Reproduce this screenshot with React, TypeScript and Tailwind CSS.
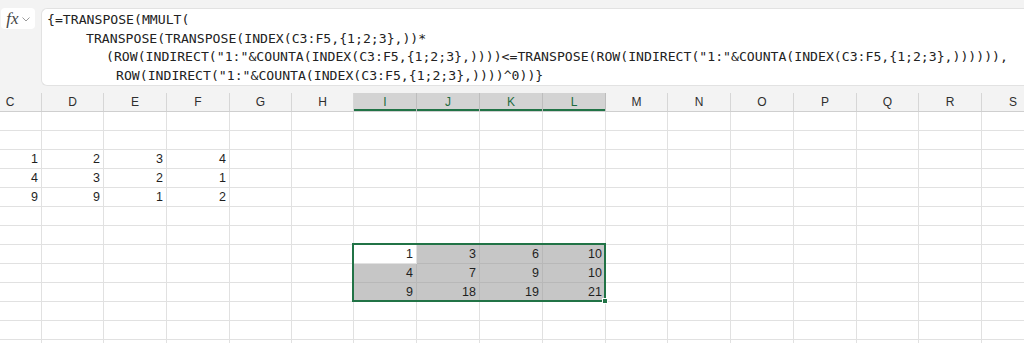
import React from 'react';

// column strip as it shows in the sheet (C is cut off on the left)
const COLS = [
    { l: 'C', w: 63 }, { l: 'D', w: 62 }, { l: 'E', w: 63 }, { l: 'F', w: 63 },
    { l: 'G', w: 62 }, { l: 'H', w: 62 }, { l: 'I', w: 63 }, { l: 'J', w: 63 },
    { l: 'K', w: 63 }, { l: 'L', w: 63 }, { l: 'M', w: 62 }, { l: 'N', w: 63 },
    { l: 'O', w: 63 }, { l: 'P', w: 63 }, { l: 'Q', w: 62 }, { l: 'R', w: 63 },
    { l: 'S', w: 63 },
];

const SELECTED_COLS = ['I', 'J', 'K', 'L'];

// row number -> { column: value }
const DATA: Record<number, Record<string, number>> = {
    3: { C: 1, D: 2, E: 3, F: 4 },
    4: { C: 4, D: 3, E: 2, F: 1 },
    5: { C: 9, D: 9, E: 1, F: 2 },
    8: { I: 1, J: 3, K: 6, L: 10 },
    9: { I: 4, J: 7, K: 9, L: 10 },
    10: { I: 9, J: 18, K: 19, L: 21 },
};

const ROWS = Array.from({ length: 13 }, (_, i) => i + 1);

const FORMULA = [
    { pad: 'pl-[5px]', text: '{=TRANSPOSE(MMULT(' },
    { pad: 'pl-[44px]', text: 'TRANSPOSE(TRANSPOSE(INDEX(C3:F5,{1;2;3},))*' },
    { pad: 'pl-[64px]', text: '(ROW(INDIRECT("1:"&COUNTA(INDEX(C3:F5,{1;2;3},))))<=TRANSPOSE(ROW(INDIRECT("1:"&COUNTA(INDEX(C3:F5,{1;2;3},)))))),' },
    { pad: 'pl-[74px]', text: 'ROW(INDIRECT("1:"&COUNTA(INDEX(C3:F5,{1;2;3},))))^0))}' },
];

const isSelected = (row: number, col: string) =>
    row >= 8 && row <= 10 && SELECTED_COLS.includes(col) && !(row === 8 && col === 'I');

export default function App() {
    return (
        <div className="relative w-[1024px] h-[343px] overflow-hidden bg-white font-['Liberation_Sans',Arial,sans-serif]">
            {/* Formula bar */}
            <div className="flex h-[93px] bg-[#f3f3f3] pt-[8px]">
                <div className="ml-px flex h-[21px] w-[34px] items-center justify-center gap-[3px] rounded bg-white">
                    <span className="font-['Liberation_Serif',serif] text-[17px] italic text-[#444] leading-none">fx</span>
                    <svg width="8" height="5" viewBox="0 0 8 5" className="mt-px">
                        <path d="M0.5 0.5 L4 4 L7.5 0.5" fill="none" stroke="#9a9a9a" strokeWidth="1" />
                    </svg>
                </div>
                <div className="ml-[6px] h-[78px] flex-1 rounded-l-md border border-r-0 border-[#e2e2e2] bg-white pt-[2px] font-['DejaVu_Sans_Mono',monospace] text-[13.15px] leading-[18.7px] text-[#222] whitespace-pre">
                    {FORMULA.map((line, i) => (
                        <div key={i} className={line.pad}>{line.text}</div>
                    ))}
                </div>
            </div>

            {/* Grid */}
            <div className="-ml-[21px]">
                <div className="flex h-[19px] border-b border-[#cfcfcf] bg-[#f3f3f3]">
                    {COLS.map((c) => {
                        const sel = SELECTED_COLS.includes(c.l);
                        return (
                            <div
                                key={c.l}
                                className={`${c.w === 62 ? 'w-[62px]' : 'w-[63px]'} shrink-0 flex items-center justify-center border-r text-[12px] ${
                                    sel
                                        ? 'bg-[#d3d3d3] border-[#bdbdbd] text-[#1e6b40] shadow-[inset_0_-2px_0_#217346]'
                                        : 'border-[#d6d6d6] text-[#2e2e2e]'
                                }`}
                            >
                                {c.l}
                            </div>
                        );
                    })}
                </div>

                {ROWS.map((r) => (
                    <div key={r} className="flex h-[19px]">
                        {COLS.map((c) => {
                            const sel = isSelected(r, c.l);
                            const v = DATA[r]?.[c.l];
                            return (
                                <div
                                    key={c.l}
                                    className={`${c.w === 62 ? 'w-[62px]' : 'w-[63px]'} shrink-0 flex items-center justify-end border-r border-b pr-[3px] text-[12.5px] text-[#1f1f1f] ${
                                        sel ? 'bg-[#c6c6c6] border-[#b8b8b8]' : 'border-[#e1e1e1]'
                                    }`}
                                >
                                    {v}
                                </div>
                            );
                        })}
                    </div>
                ))}
            </div>

            {/* Selection outline + fill handle */}
            <div className="absolute left-[352px] top-[243px] h-[59px] w-[254px] border-2 border-[#217346]" />
            <div className="absolute left-[602px] top-[298px] h-[6px] w-[6px] border border-white bg-[#217346]" />
        </div>
    );
}
